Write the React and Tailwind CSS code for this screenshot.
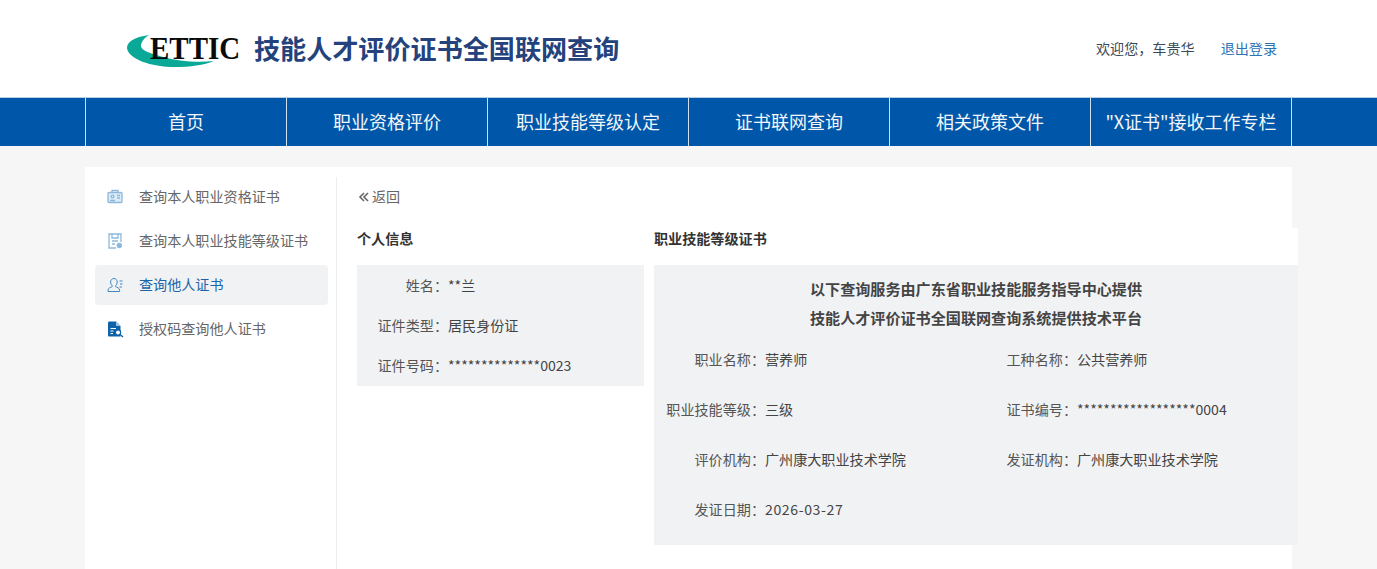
const FONT = 'font-["Noto_Sans_CJK_SC","Noto_Sans",sans-serif]'

const NAV_ITEMS = ['首页', '职业资格评价', '职业技能等级认定', '证书联网查询', '相关政策文件', '"X证书"接收工作专栏']

const PERSON_ROWS = [
  ['姓名：', '**兰'],
  ['证件类型：', '居民身份证'],
  ['证件号码：', '**************0023'],
]

const CERT_ROWS = [
  ['职业名称：', '营养师'],
  ['工种名称：', '公共营养师'],
  ['职业技能等级：', '三级'],
  ['证书编号：', '******************0004'],
  ['评价机构：', '广州康大职业技术学院'],
  ['发证机构：', '广州康大职业技术学院'],
  ['发证日期：', '2026-03-27', 'tracking-[0.6px]'],
]

function Logo() {
  return (
    <svg width="118" height="40" viewBox="0 0 118 40" className="shrink-0">
      <path d="M22 7 C7 9 0 14 0 20 C1 31 24 39 48 39 C63 39 77 37 87 33 C70 35 50 33 36 29 C22 25 13 22 14 17 C15 13 17 10 22 7 Z" fill="#0aa896" />
      <text x="23" y="27.7" transform="scale(1 1.12)" fontFamily="Liberation Serif" fontWeight="700" fontSize="29" fill="#0b0b0b">ETTIC</text>
    </svg>
  )
}

function BackIcon() {
  return (
    <svg width="15" height="10" viewBox="0 0 15 10" fill="none" stroke="#666" strokeWidth="1.6">
      <path d="M7 1 L3 5 L7 9 M11 1 L7 5 L11 9" />
    </svg>
  )
}

function BadgeIcon() {
  return (
    <svg width="16" height="16" viewBox="0 0 16 16" fill="none" stroke="#8db8dc" strokeWidth="1.3">
      <rect x="1" y="3.5" width="14" height="10" rx="1" fill="#dcebf6" />
      <path d="M5 3.5 V1.5 H11 V3.5" />
      <circle cx="5.5" cy="7.5" r="1.4" />
      <path d="M3 11.5 H8 M10 6.5 H13 M10 9 H13" />
    </svg>
  )
}

function FormIcon() {
  return (
    <svg width="16" height="16" viewBox="0 0 16 16" fill="none" stroke="#8db8dc" strokeWidth="1.3">
      <path d="M9 15 H2 V1 H14 V9" />
      <path d="M5 1 V5 H11 V1 M5 8 H11 M5 11 H8" />
      <circle cx="12.3" cy="12.5" r="2" fill="#8db8dc" />
    </svg>
  )
}

function PersonIcon() {
  return (
    <svg width="16" height="16" viewBox="0 0 16 16" fill="none" stroke="#3f86c2" strokeWidth="1">
      <path d="M7 1.5 C4.8 1.5 3.6 3.2 3.6 5 C3.6 6.6 4.3 7.8 5.2 8.6 V9.6 C3.6 10.4 1 11 1 13.2 V14.5 H12.6 V13.2 C12.6 11 10 10.4 8.6 9.6 V8.6 C9.6 7.8 10.2 6.6 10.2 5 C10.2 3.2 9 1.5 7 1.5 Z" />
      <path d="M12.5 4 H15.5 M13 7 H15.5 M12.5 10 H15" />
    </svg>
  )
}

function SearchDocIcon() {
  return (
    <svg width="17" height="17" viewBox="0 0 17 17">
      <path d="M1 1.5 Q1 0.5 2 0.5 H9 L13.5 5 V15.5 H2 Q1 15.5 1 14.5 Z" fill="#0f62a8" />
      <path d="M9 0.5 V5 H13.5" fill="#9cc3e2" />
      <path d="M3.5 7.5 H9 M3.5 10 H6.5 M3.5 12.5 H6" stroke="#fff" strokeWidth="1.1" />
      <circle cx="11" cy="11.5" r="2.6" fill="#fff" stroke="#0f62a8" strokeWidth="1.2" />
      <path d="M13 13.5 L16 16" stroke="#0f62a8" strokeWidth="1.3" />
    </svg>
  )
}

const SIDE_ITEMS = [
  { label: '查询本人职业资格证书', icon: <BadgeIcon /> },
  { label: '查询本人职业技能等级证书', icon: <FormIcon /> },
  { label: '查询他人证书', icon: <PersonIcon />, active: true },
  { label: '授权码查询他人证书', icon: <SearchDocIcon /> },
]

function SideItem({ label, icon, active }) {
  return (
    <div className={`flex h-10 items-center rounded-sm pl-3 ${active ? 'bg-[#f1f2f4] text-[#1b64a8]' : 'text-[#666]'}`}>
      <span className="flex w-8 shrink-0">{icon}</span>
      {label}
    </div>
  )
}

function Field({ label, value, labelWidth, height, valueClass = '' }) {
  return (
    <div className={`flex items-center ${height}`}>
      <span className={`shrink-0 text-right text-[#555] ${labelWidth}`}>{label}</span>
      <span className={`whitespace-nowrap text-[#444] ${valueClass}`}>{value}</span>
    </div>
  )
}

export default function App() {
  return (
    <div className={`${FONT} h-[569px] overflow-hidden bg-[#f6f6f6] text-[14.1px]`}>
      <header className="flex h-[97px] items-center bg-white pr-[100px] pl-[127px]">
        <div className="-mt-[1px]">
          <Logo />
        </div>
        <h1 className="ml-[9px] text-[26.1px] font-bold text-[#24427c]">技能人才评价证书全国联网查询</h1>
        <div className="ml-auto flex items-center gap-[26px] text-[#3a4a5c]">
          <span>欢迎您，车贵华</span>
          <span className="text-[#2a73b5]">退出登录</span>
        </div>
      </header>

      <nav className="flex h-[49px] border-t border-[#b9cfe6] bg-[#0056a8] pl-[85px]">
        {NAV_ITEMS.map((item) => (
          <div key={item} className="flex w-[201px] items-center justify-center border-l border-[#cfe0f0] pb-[2px] text-[18px] whitespace-nowrap text-[#f2f6fb] last:w-[202px] last:border-r">
            {item}
          </div>
        ))}
      </nav>

      <main className="mt-[21px] ml-[85px] flex h-[402px] w-[1207px] bg-white pt-[10px]">
        <aside className="flex w-[252px] shrink-0 flex-col gap-1 border-r border-[#eeeeee] pr-2 pl-[10px]">
          {SIDE_ITEMS.map((item) => (
            <SideItem key={item.label} {...item} />
          ))}
        </aside>

        <section className="min-w-0 flex-1 pl-5">
          <div className="-mt-px flex h-[41px] items-center text-[#666]">
            <BackIcon />
            <span>返回</span>
          </div>
          <div className="mt-[11px] flex items-start">
            <div className="w-[287px] shrink-0">
              <h2 className="h-[37px] leading-5 font-bold text-[#333]">个人信息</h2>
              <div className="bg-[#f1f2f4] pt-px">
                {PERSON_ROWS.map(([label, value]) => (
                  <Field key={label} label={label} value={value} labelWidth="w-[91px]" height="h-10" />
                ))}
              </div>
            </div>
            <div className="ml-[10px] w-[644px] shrink-0 bg-white">
              <h2 className="h-[37px] leading-5 font-bold text-[#333]">职业技能等级证书</h2>
              <div className="h-[280px] bg-[#f1f2f4]">
                <div className="pt-[9px] text-center text-[15.1px] leading-[29px] font-bold text-[#444]">
                  <p>以下查询服务由广东省职业技能服务指导中心提供</p>
                  <p>技能人才评价证书全国联网查询系统提供技术平台</p>
                </div>
                <div className="mt-[3px] grid grid-cols-[312px_312px]">
                  {CERT_ROWS.map(([label, value, valueClass]) => (
                    <Field key={label} label={label} value={value} valueClass={valueClass} labelWidth="w-[111px]" height="h-[50px]" />
                  ))}
                </div>
              </div>
            </div>
          </div>
        </section>
      </main>
    </div>
  )
}
